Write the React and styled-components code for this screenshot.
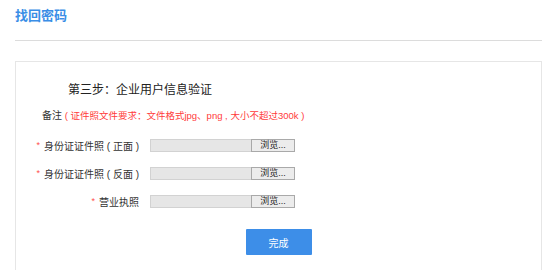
import styled, { createGlobalStyle } from 'styled-components';

const GlobalStyle = createGlobalStyle`
    html, body {
        margin: 0;
        padding: 0;
        background: #fff;
        font-family: "Liberation Sans", "Noto Sans CJK SC", sans-serif;
        color: #333;
    }
`;

const fields = [
    { label: '身份证证件照 ( 正面 )' },
    { label: '身份证证件照 ( 反面 )' },
    { label: '营业执照' },
];

export default function App() {
    return (
        <>
            <GlobalStyle />
            <Page>
                <Header>
                    <Title>找回密码</Title>
                </Header>
                <Panel>
                    <StepTitle>第三步：企业用户信息验证</StepTitle>
                    <Note>
                        备注<NoteRed> ( 证件照文件要求：文件格式jpg、png , 大小不超过300k )</NoteRed>
                    </Note>
                    <Form>
                        {fields.map((f) => (
                            <Row key={f.label}>
                                <Label>
                                    <Star>*</Star>
                                    {f.label}
                                </Label>
                                <FileBox>
                                    <FilePath />
                                    <Browse>浏览...</Browse>
                                </FileBox>
                            </Row>
                        ))}
                    </Form>
                    <Actions>
                        <Submit>完成</Submit>
                    </Actions>
                </Panel>
            </Page>
        </>
    );
}

const Page = styled.div`
    width: 527px;
    margin-left: 15px;
`;

const Header = styled.div`
    height: 40px;
    border-bottom: 1px solid #dcdcdc;
    display: flex;
    align-items: flex-start;
`;

const Title = styled.h1`
    margin: 7px 0 0;
    font-size: 13px;
    line-height: 18px;
    font-weight: bold;
    color: #3a8ee6;
`;

const Panel = styled.div`
    margin-top: 20px;
    border: 1px solid #e6e6e6;
    border-bottom: none;
    height: 209px;
    padding: 18px 0 0;
    box-sizing: border-box;
`;

const StepTitle = styled.div`
    padding-left: 52px;
    font-size: 12px;
    line-height: 20px;
    color: #222;
`;

const Note = styled.div`
    margin-top: 8px;
    padding-left: 26px;
    font-size: 10px;
    line-height: 16px;
    color: #333;
`;

const NoteRed = styled.span`
    color: #ff3b3b;
    font-size: 9.5px;
`;

const Form = styled.div`
    margin-top: 7px;
    display: flex;
    flex-direction: column;
`;

const Row = styled.div`
    height: 28px;
    display: grid;
    grid-template-columns: 123px 145px;
    column-gap: 11px;
    align-items: center;
`;

const Label = styled.div`
    text-align: right;
    font-size: 10px;
    color: #333;
    white-space: nowrap;
`;

const Star = styled.span`
    color: #ff4d4d;
    font-size: 9px;
    margin-right: 4px;
    vertical-align: 2px;
`;

const FileBox = styled.div`
    display: flex;
    height: 13px;
`;

const FilePath = styled.div`
    width: 101px;
    background: #e6e6e6;
    border: 1px solid #d2d2d2;
    border-right: none;
    box-sizing: border-box;
`;

const Browse = styled.div`
    width: 44px;
    background: #ececec;
    border: 1px solid #a9a9a9;
    box-sizing: border-box;
    font-size: 9px;
    line-height: 11px;
    text-align: center;
    color: #222;
`;

const Actions = styled.div`
    margin-top: 14px;
    display: flex;
    justify-content: center;
`;

const Submit = styled.button`
    width: 66px;
    height: 26px;
    border: none;
    border-radius: 1px;
    background: #3d8ee8;
    color: #fff;
    font-family: inherit;
    font-size: 10px;
    cursor: pointer;
`;
